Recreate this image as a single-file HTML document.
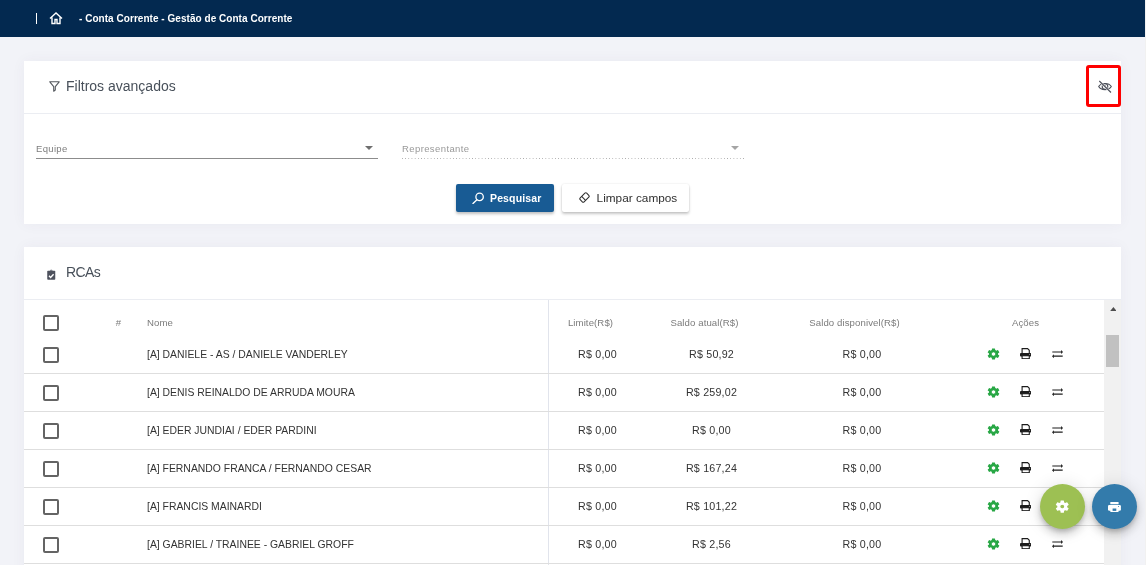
<!DOCTYPE html>
<html><head><meta charset="utf-8">
<style>
*{box-sizing:border-box;margin:0;padding:0}
html,body{width:1146px;height:565px;overflow:hidden;background:#f2f3f8;font-family:"Liberation Sans",sans-serif;}
.abs,.t{position:absolute}
.t{white-space:nowrap}
#top{position:absolute;left:0;top:0;width:1146px;height:37px;background:#032950}
#top .pipe{position:absolute;left:36px;top:13px;width:1px;height:11px;background:#fff}
#top .crumb{position:absolute;left:79px;top:13px;letter-spacing:.04px;font-size:10px;font-weight:bold;color:#fff;white-space:nowrap;line-height:12px}
.card{position:absolute;left:24px;width:1097px;background:#fff;box-shadow:0 0 13px rgba(82,63,105,.05)}
.card .hd{position:absolute;left:0;top:52px;width:100%;height:1px;background:#ebedf2}
.title{position:absolute;left:42px;top:17px;font-size:14px;color:#48505a;white-space:nowrap;line-height:16px}
.lbl{font-size:9.5px;line-height:12px;color:#7d7d7d}
.cb{position:absolute;width:16px;height:16px;border:2px solid #646464;border-radius:2px;background:#fff}
.th{font-size:9.6px;letter-spacing:.1px;line-height:12px;color:#7b7b7b;transform:translateX(-50%)}
.td{font-size:10.4px;line-height:13px;color:#333}
.num{font-size:10.7px;letter-spacing:.2px}
.tdc{transform:translateX(-50%)}
.rb{position:absolute;left:0;width:1080px;height:1px;background:#dedede}
.fab{position:absolute;width:45px;height:45px;border-radius:50%;box-shadow:0 3px 5px -1px rgba(0,0,0,.2),0 6px 10px 0 rgba(0,0,0,.14),0 1px 18px 0 rgba(0,0,0,.12)}
#wrap{position:absolute;left:0;top:0;width:1146px;height:565px;will-change:transform}
</style></head><body><div id="wrap">
<div id="top"><div class="pipe"></div>
<svg class="abs" style="left:49px;top:12px" width="14" height="13" viewBox="0 0 14 13"><path d="M1 6.5 L7 1 L13 6.5 M3 5.5 V11.5 H6 V7.5 H8 V11.5 H11 V5.5" fill="none" stroke="#fff" stroke-width="1.4" stroke-linejoin="miter"/></svg>
<div class="crumb">- Conta Corrente - Gestão de Conta Corrente</div></div>

<div class="card" id="c1" style="top:61px;height:163px">
 <div class="hd"></div>
 <svg class="abs" style="left:24.7px;top:19.6px" width="11" height="11" viewBox="0 0 11 11"><path d="M0.8 0.8 H10.2 L6.3 5.6 V9 L4.7 10.2 V5.6 Z" fill="none" stroke="#55595f" stroke-width="1.1" stroke-linejoin="round"/></svg>
 <div class="title">Filtros avançados</div>
 <!-- red highlight -->
 <div class="abs" style="left:1062px;top:4px;width:35px;height:42px;border:3px solid #fe0000;border-radius:3px"></div>
 <svg class="abs" style="left:1073.5px;top:19px" width="15" height="14" viewBox="0 0 15 14"><path d="M.7 6.5 C2.9 2.4 11 2.4 13.3 6.5 C11 10.6 2.9 10.6 .7 6.5 Z" fill="none" stroke="#4a4e58" stroke-width="1.1"/><circle cx="7" cy="6.5" r="2.8" fill="none" stroke="#4a4e58" stroke-width="1.1"/><circle cx="6.9" cy="6.1" r="1.1" fill="#4a4e58"/><path d="M1.3 1 L13 12.5" stroke="#fff" stroke-width="2.2"/><path d="M1.3 1 L13 12.5" stroke="#4a4e58" stroke-width="1.1"/></svg>

 <div class="t lbl" style="left:12px;top:82px;letter-spacing:.33px">Equipe</div>
 <div class="abs" style="left:12px;top:97px;width:342px;height:1px;background:#8c8c8c"></div>
 <svg class="abs" style="left:341px;top:85px" width="8" height="4" viewBox="0 0 8 4"><path d="M0 0H8L4 4Z" fill="#6f6f6f"/></svg>

 <div class="t lbl" style="left:378px;top:82px;color:#999;letter-spacing:.4px">Representante</div>
 <div class="abs" style="left:378px;top:97px;width:342px;height:1px;background-image:linear-gradient(to right,#a9a9a9 0,#a9a9a9 1px,transparent 1px);background-size:3.2px 1px;background-repeat:repeat-x"></div>
 <svg class="abs" style="left:707px;top:85px" width="8" height="4" viewBox="0 0 8 4"><path d="M0 0H8L4 4Z" fill="#a5a5a5"/></svg>

 <!-- buttons -->
 <div class="abs" style="left:432px;top:123px;width:98px;height:28px;background:#185b94;border-radius:2px;box-shadow:0 2px 3px rgba(0,0,0,.25)"></div>
 <svg class="abs" style="left:448px;top:131px" width="13" height="12" viewBox="0 0 13 12"><circle cx="7.6" cy="4.9" r="3.7" fill="none" stroke="#fff" stroke-width="1.3"/><path d="M4.9 7.7 L1 11.4" stroke="#fff" stroke-width="1.4" stroke-linecap="round"/></svg>
 <div class="t" style="left:466px;top:131px;font-size:10.5px;letter-spacing:.14px;line-height:13px;font-weight:bold;color:#fff">Pesquisar</div>
 <div class="abs" style="left:538px;top:123px;width:127px;height:28px;background:#fff;border-radius:2px;box-shadow:0 2px 3px rgba(0,0,0,.22),0 0 2px rgba(0,0,0,.12)"></div>
 <svg class="abs" style="left:554.6px;top:131.4px" width="11" height="11" viewBox="0 0 12 12"><g transform="rotate(-45 6 6)"><rect x="1" y="3" width="10" height="6" rx="1.4" fill="none" stroke="#2e2e2e" stroke-width="1.15"/><path d="M4.6 3V9" stroke="#2e2e2e" stroke-width="1.1"/></g></svg>
 <div class="t" style="left:572.6px;top:130px;font-size:11.8px;line-height:14px;color:#2f2f2f">Limpar campos</div>
</div>

<div class="card" id="c2" style="top:247px;height:330px">
 <div class="hd"></div>
 <svg class="abs" style="left:23px;top:22.3px" width="8.5" height="11.2" viewBox="0 0 9 12"><path d="M3 2.2 A1.5 1.7 0 0 1 6 2.2Z" fill="#8d909a"/><rect x=".2" y="2" width="8.6" height="9.6" rx=".8" fill="#4d515d"/><path d="M2.1 7.3 L3.8 9 L7 5.7" fill="none" stroke="#fff" stroke-width="1.5"/></svg>
 <div class="title" style="letter-spacing:-.6px">RCAs</div>
 <!-- table -->
 <div class="abs" style="left:524px;top:53px;width:1px;height:280px;background:#e1e4ec"></div>
 <div class="cb" style="left:19px;top:68px"></div>
 <div class="t th" style="left:94.5px;top:70px">#</div>
 <div class="t th" style="left:123px;top:70px;transform:none">Nome</div>
 <div class="t th" style="left:566.5px;top:70px">Limite(R$)</div>
 <div class="t th" style="left:680.5px;top:70px">Saldo atual(R$)</div>
 <div class="t th" style="left:830.5px;top:70px">Saldo disponivel(R$)</div>
 <div class="t th" style="left:1001.5px;top:70px">Ações</div>

 <div class="cb" style="left:19px;top:100px"></div>
 <div class="t td" style="left:123px;top:101px">[A] DANIELE - AS / DANIELE VANDERLEY</div>
 <div class="t td tdc num" style="left:573.5px;top:101px">R$ 0,00</div>
 <div class="t td tdc num" style="left:687.5px;top:101px">R$ 50,92</div>
 <div class="t td tdc num" style="left:838px;top:101px">R$ 0,00</div>
 <svg class="abs" style="left:961.9px;top:99.6px" width="15" height="14" viewBox="0 0 24 24" preserveAspectRatio="none" fill="#28a745"><path d="M19.14 12.94c.04-.3.06-.61.06-.94 0-.32-.02-.64-.07-.94l2.03-1.58a.49.49 0 0 0 .12-.61l-1.92-3.32a.488.488 0 0 0-.59-.22l-2.39.96c-.5-.38-1.03-.7-1.62-.94l-.36-2.54a.484.484 0 0 0-.48-.41h-3.84c-.24 0-.43.17-.47.41l-.36 2.54c-.59.24-1.13.57-1.62.94l-2.39-.96c-.22-.08-.47 0-.59.22L2.74 8.87c-.12.21-.08.47.12.61l2.03 1.58c-.05.3-.09.63-.09.94s.02.64.07.94l-2.03 1.58a.49.49 0 0 0-.12.61l1.92 3.32c.12.22.37.29.59.22l2.39-.96c.5.38 1.03.7 1.62.94l.36 2.54c.05.24.24.41.48.41h3.84c.24 0 .44-.17.47-.41l.36-2.54c.59-.24 1.13-.56 1.62-.94l2.39.96c.22.08.47 0 .59-.22l1.92-3.32c.12-.22.07-.47-.12-.61l-2.01-1.58zM12 15.6c-1.98 0-3.6-1.62-3.6-3.6s1.62-3.6 3.6-3.6 3.6 1.62 3.6 3.6-1.62 3.6-3.6 3.6z"/><circle cx="12" cy="12" r="3.7" fill="none" stroke="#28a745" stroke-width="1.4"/></svg>
 <svg class="abs" style="left:995.7px;top:101.1px" width="11.2" height="11.3" viewBox="0 0 11.2 11" preserveAspectRatio="none"><path d="M2.1 5 V.55 H7.6 L9.3 2.2 V5" fill="#fff" stroke="#1c1c1c" stroke-width="1.1"/><rect x="0" y="4.9" width="11.2" height="3.3" rx=".9" fill="#1c1c1c"/><rect x="2.1" y="7.5" width="7.2" height="2.95" fill="#fff" stroke="#1c1c1c" stroke-width="1.1"/><circle cx="9.75" cy="6.25" r=".45" fill="#fff"/></svg>
 <svg class="abs" style="left:1027.9px;top:102.6px" width="11" height="8.2" viewBox="0 0 11 8.2"><path d="M.3 2 H9.4 M1.6 6.2 H10.7" stroke="#1c1c1c" stroke-width="1.2"/><path d="M9.1 0 L11 2 L9.1 4Z M1.9 4.2 L0 6.2 L1.9 8.2Z" fill="#1c1c1c"/></svg>
 <div class="rb" style="top:126px"></div>
 <div class="cb" style="left:19px;top:138px"></div>
 <div class="t td" style="left:123px;top:139px">[A] DENIS REINALDO DE ARRUDA MOURA</div>
 <div class="t td tdc num" style="left:573.5px;top:139px">R$ 0,00</div>
 <div class="t td tdc num" style="left:687.5px;top:139px">R$ 259,02</div>
 <div class="t td tdc num" style="left:838px;top:139px">R$ 0,00</div>
 <svg class="abs" style="left:961.9px;top:137.6px" width="15" height="14" viewBox="0 0 24 24" preserveAspectRatio="none" fill="#28a745"><path d="M19.14 12.94c.04-.3.06-.61.06-.94 0-.32-.02-.64-.07-.94l2.03-1.58a.49.49 0 0 0 .12-.61l-1.92-3.32a.488.488 0 0 0-.59-.22l-2.39.96c-.5-.38-1.03-.7-1.62-.94l-.36-2.54a.484.484 0 0 0-.48-.41h-3.84c-.24 0-.43.17-.47.41l-.36 2.54c-.59.24-1.13.57-1.62.94l-2.39-.96c-.22-.08-.47 0-.59.22L2.74 8.87c-.12.21-.08.47.12.61l2.03 1.58c-.05.3-.09.63-.09.94s.02.64.07.94l-2.03 1.58a.49.49 0 0 0-.12.61l1.92 3.32c.12.22.37.29.59.22l2.39-.96c.5.38 1.03.7 1.62.94l.36 2.54c.05.24.24.41.48.41h3.84c.24 0 .44-.17.47-.41l.36-2.54c.59-.24 1.13-.56 1.62-.94l2.39.96c.22.08.47 0 .59-.22l1.92-3.32c.12-.22.07-.47-.12-.61l-2.01-1.58zM12 15.6c-1.98 0-3.6-1.62-3.6-3.6s1.62-3.6 3.6-3.6 3.6 1.62 3.6 3.6-1.62 3.6-3.6 3.6z"/><circle cx="12" cy="12" r="3.7" fill="none" stroke="#28a745" stroke-width="1.4"/></svg>
 <svg class="abs" style="left:995.7px;top:139.1px" width="11.2" height="11.3" viewBox="0 0 11.2 11" preserveAspectRatio="none"><path d="M2.1 5 V.55 H7.6 L9.3 2.2 V5" fill="#fff" stroke="#1c1c1c" stroke-width="1.1"/><rect x="0" y="4.9" width="11.2" height="3.3" rx=".9" fill="#1c1c1c"/><rect x="2.1" y="7.5" width="7.2" height="2.95" fill="#fff" stroke="#1c1c1c" stroke-width="1.1"/><circle cx="9.75" cy="6.25" r=".45" fill="#fff"/></svg>
 <svg class="abs" style="left:1027.9px;top:140.6px" width="11" height="8.2" viewBox="0 0 11 8.2"><path d="M.3 2 H9.4 M1.6 6.2 H10.7" stroke="#1c1c1c" stroke-width="1.2"/><path d="M9.1 0 L11 2 L9.1 4Z M1.9 4.2 L0 6.2 L1.9 8.2Z" fill="#1c1c1c"/></svg>
 <div class="rb" style="top:164px"></div>
 <div class="cb" style="left:19px;top:176px"></div>
 <div class="t td" style="left:123px;top:177px">[A] EDER JUNDIAI / EDER PARDINI</div>
 <div class="t td tdc num" style="left:573.5px;top:177px">R$ 0,00</div>
 <div class="t td tdc num" style="left:687.5px;top:177px">R$ 0,00</div>
 <div class="t td tdc num" style="left:838px;top:177px">R$ 0,00</div>
 <svg class="abs" style="left:961.9px;top:175.6px" width="15" height="14" viewBox="0 0 24 24" preserveAspectRatio="none" fill="#28a745"><path d="M19.14 12.94c.04-.3.06-.61.06-.94 0-.32-.02-.64-.07-.94l2.03-1.58a.49.49 0 0 0 .12-.61l-1.92-3.32a.488.488 0 0 0-.59-.22l-2.39.96c-.5-.38-1.03-.7-1.62-.94l-.36-2.54a.484.484 0 0 0-.48-.41h-3.84c-.24 0-.43.17-.47.41l-.36 2.54c-.59.24-1.13.57-1.62.94l-2.39-.96c-.22-.08-.47 0-.59.22L2.74 8.87c-.12.21-.08.47.12.61l2.03 1.58c-.05.3-.09.63-.09.94s.02.64.07.94l-2.03 1.58a.49.49 0 0 0-.12.61l1.92 3.32c.12.22.37.29.59.22l2.39-.96c.5.38 1.03.7 1.62.94l.36 2.54c.05.24.24.41.48.41h3.84c.24 0 .44-.17.47-.41l.36-2.54c.59-.24 1.13-.56 1.62-.94l2.39.96c.22.08.47 0 .59-.22l1.92-3.32c.12-.22.07-.47-.12-.61l-2.01-1.58zM12 15.6c-1.98 0-3.6-1.62-3.6-3.6s1.62-3.6 3.6-3.6 3.6 1.62 3.6 3.6-1.62 3.6-3.6 3.6z"/><circle cx="12" cy="12" r="3.7" fill="none" stroke="#28a745" stroke-width="1.4"/></svg>
 <svg class="abs" style="left:995.7px;top:177.1px" width="11.2" height="11.3" viewBox="0 0 11.2 11" preserveAspectRatio="none"><path d="M2.1 5 V.55 H7.6 L9.3 2.2 V5" fill="#fff" stroke="#1c1c1c" stroke-width="1.1"/><rect x="0" y="4.9" width="11.2" height="3.3" rx=".9" fill="#1c1c1c"/><rect x="2.1" y="7.5" width="7.2" height="2.95" fill="#fff" stroke="#1c1c1c" stroke-width="1.1"/><circle cx="9.75" cy="6.25" r=".45" fill="#fff"/></svg>
 <svg class="abs" style="left:1027.9px;top:178.6px" width="11" height="8.2" viewBox="0 0 11 8.2"><path d="M.3 2 H9.4 M1.6 6.2 H10.7" stroke="#1c1c1c" stroke-width="1.2"/><path d="M9.1 0 L11 2 L9.1 4Z M1.9 4.2 L0 6.2 L1.9 8.2Z" fill="#1c1c1c"/></svg>
 <div class="rb" style="top:202px"></div>
 <div class="cb" style="left:19px;top:214px"></div>
 <div class="t td" style="left:123px;top:215px">[A] FERNANDO FRANCA / FERNANDO CESAR</div>
 <div class="t td tdc num" style="left:573.5px;top:215px">R$ 0,00</div>
 <div class="t td tdc num" style="left:687.5px;top:215px">R$ 167,24</div>
 <div class="t td tdc num" style="left:838px;top:215px">R$ 0,00</div>
 <svg class="abs" style="left:961.9px;top:213.6px" width="15" height="14" viewBox="0 0 24 24" preserveAspectRatio="none" fill="#28a745"><path d="M19.14 12.94c.04-.3.06-.61.06-.94 0-.32-.02-.64-.07-.94l2.03-1.58a.49.49 0 0 0 .12-.61l-1.92-3.32a.488.488 0 0 0-.59-.22l-2.39.96c-.5-.38-1.03-.7-1.62-.94l-.36-2.54a.484.484 0 0 0-.48-.41h-3.84c-.24 0-.43.17-.47.41l-.36 2.54c-.59.24-1.13.57-1.62.94l-2.39-.96c-.22-.08-.47 0-.59.22L2.74 8.87c-.12.21-.08.47.12.61l2.03 1.58c-.05.3-.09.63-.09.94s.02.64.07.94l-2.03 1.58a.49.49 0 0 0-.12.61l1.92 3.32c.12.22.37.29.59.22l2.39-.96c.5.38 1.03.7 1.62.94l.36 2.54c.05.24.24.41.48.41h3.84c.24 0 .44-.17.47-.41l.36-2.54c.59-.24 1.13-.56 1.62-.94l2.39.96c.22.08.47 0 .59-.22l1.92-3.32c.12-.22.07-.47-.12-.61l-2.01-1.58zM12 15.6c-1.98 0-3.6-1.62-3.6-3.6s1.62-3.6 3.6-3.6 3.6 1.62 3.6 3.6-1.62 3.6-3.6 3.6z"/><circle cx="12" cy="12" r="3.7" fill="none" stroke="#28a745" stroke-width="1.4"/></svg>
 <svg class="abs" style="left:995.7px;top:215.1px" width="11.2" height="11.3" viewBox="0 0 11.2 11" preserveAspectRatio="none"><path d="M2.1 5 V.55 H7.6 L9.3 2.2 V5" fill="#fff" stroke="#1c1c1c" stroke-width="1.1"/><rect x="0" y="4.9" width="11.2" height="3.3" rx=".9" fill="#1c1c1c"/><rect x="2.1" y="7.5" width="7.2" height="2.95" fill="#fff" stroke="#1c1c1c" stroke-width="1.1"/><circle cx="9.75" cy="6.25" r=".45" fill="#fff"/></svg>
 <svg class="abs" style="left:1027.9px;top:216.6px" width="11" height="8.2" viewBox="0 0 11 8.2"><path d="M.3 2 H9.4 M1.6 6.2 H10.7" stroke="#1c1c1c" stroke-width="1.2"/><path d="M9.1 0 L11 2 L9.1 4Z M1.9 4.2 L0 6.2 L1.9 8.2Z" fill="#1c1c1c"/></svg>
 <div class="rb" style="top:240px"></div>
 <div class="cb" style="left:19px;top:252px"></div>
 <div class="t td" style="left:123px;top:253px">[A] FRANCIS MAINARDI</div>
 <div class="t td tdc num" style="left:573.5px;top:253px">R$ 0,00</div>
 <div class="t td tdc num" style="left:687.5px;top:253px">R$ 101,22</div>
 <div class="t td tdc num" style="left:838px;top:253px">R$ 0,00</div>
 <svg class="abs" style="left:961.9px;top:251.6px" width="15" height="14" viewBox="0 0 24 24" preserveAspectRatio="none" fill="#28a745"><path d="M19.14 12.94c.04-.3.06-.61.06-.94 0-.32-.02-.64-.07-.94l2.03-1.58a.49.49 0 0 0 .12-.61l-1.92-3.32a.488.488 0 0 0-.59-.22l-2.39.96c-.5-.38-1.03-.7-1.62-.94l-.36-2.54a.484.484 0 0 0-.48-.41h-3.84c-.24 0-.43.17-.47.41l-.36 2.54c-.59.24-1.13.57-1.62.94l-2.39-.96c-.22-.08-.47 0-.59.22L2.74 8.87c-.12.21-.08.47.12.61l2.03 1.58c-.05.3-.09.63-.09.94s.02.64.07.94l-2.03 1.58a.49.49 0 0 0-.12.61l1.92 3.32c.12.22.37.29.59.22l2.39-.96c.5.38 1.03.7 1.62.94l.36 2.54c.05.24.24.41.48.41h3.84c.24 0 .44-.17.47-.41l.36-2.54c.59-.24 1.13-.56 1.62-.94l2.39.96c.22.08.47 0 .59-.22l1.92-3.32c.12-.22.07-.47-.12-.61l-2.01-1.58zM12 15.6c-1.98 0-3.6-1.62-3.6-3.6s1.62-3.6 3.6-3.6 3.6 1.62 3.6 3.6-1.62 3.6-3.6 3.6z"/><circle cx="12" cy="12" r="3.7" fill="none" stroke="#28a745" stroke-width="1.4"/></svg>
 <svg class="abs" style="left:995.7px;top:253.1px" width="11.2" height="11.3" viewBox="0 0 11.2 11" preserveAspectRatio="none"><path d="M2.1 5 V.55 H7.6 L9.3 2.2 V5" fill="#fff" stroke="#1c1c1c" stroke-width="1.1"/><rect x="0" y="4.9" width="11.2" height="3.3" rx=".9" fill="#1c1c1c"/><rect x="2.1" y="7.5" width="7.2" height="2.95" fill="#fff" stroke="#1c1c1c" stroke-width="1.1"/><circle cx="9.75" cy="6.25" r=".45" fill="#fff"/></svg>
 <svg class="abs" style="left:1027.9px;top:254.6px" width="11" height="8.2" viewBox="0 0 11 8.2"><path d="M.3 2 H9.4 M1.6 6.2 H10.7" stroke="#1c1c1c" stroke-width="1.2"/><path d="M9.1 0 L11 2 L9.1 4Z M1.9 4.2 L0 6.2 L1.9 8.2Z" fill="#1c1c1c"/></svg>
 <div class="rb" style="top:278px"></div>
 <div class="cb" style="left:19px;top:290px"></div>
 <div class="t td" style="left:123px;top:291px">[A] GABRIEL / TRAINEE - GABRIEL GROFF</div>
 <div class="t td tdc num" style="left:573.5px;top:291px">R$ 0,00</div>
 <div class="t td tdc num" style="left:687.5px;top:291px">R$ 2,56</div>
 <div class="t td tdc num" style="left:838px;top:291px">R$ 0,00</div>
 <svg class="abs" style="left:961.9px;top:289.6px" width="15" height="14" viewBox="0 0 24 24" preserveAspectRatio="none" fill="#28a745"><path d="M19.14 12.94c.04-.3.06-.61.06-.94 0-.32-.02-.64-.07-.94l2.03-1.58a.49.49 0 0 0 .12-.61l-1.92-3.32a.488.488 0 0 0-.59-.22l-2.39.96c-.5-.38-1.03-.7-1.62-.94l-.36-2.54a.484.484 0 0 0-.48-.41h-3.84c-.24 0-.43.17-.47.41l-.36 2.54c-.59.24-1.13.57-1.62.94l-2.39-.96c-.22-.08-.47 0-.59.22L2.74 8.87c-.12.21-.08.47.12.61l2.03 1.58c-.05.3-.09.63-.09.94s.02.64.07.94l-2.03 1.58a.49.49 0 0 0-.12.61l1.92 3.32c.12.22.37.29.59.22l2.39-.96c.5.38 1.03.7 1.62.94l.36 2.54c.05.24.24.41.48.41h3.84c.24 0 .44-.17.47-.41l.36-2.54c.59-.24 1.13-.56 1.62-.94l2.39.96c.22.08.47 0 .59-.22l1.92-3.32c.12-.22.07-.47-.12-.61l-2.01-1.58zM12 15.6c-1.98 0-3.6-1.62-3.6-3.6s1.62-3.6 3.6-3.6 3.6 1.62 3.6 3.6-1.62 3.6-3.6 3.6z"/><circle cx="12" cy="12" r="3.7" fill="none" stroke="#28a745" stroke-width="1.4"/></svg>
 <svg class="abs" style="left:995.7px;top:291.1px" width="11.2" height="11.3" viewBox="0 0 11.2 11" preserveAspectRatio="none"><path d="M2.1 5 V.55 H7.6 L9.3 2.2 V5" fill="#fff" stroke="#1c1c1c" stroke-width="1.1"/><rect x="0" y="4.9" width="11.2" height="3.3" rx=".9" fill="#1c1c1c"/><rect x="2.1" y="7.5" width="7.2" height="2.95" fill="#fff" stroke="#1c1c1c" stroke-width="1.1"/><circle cx="9.75" cy="6.25" r=".45" fill="#fff"/></svg>
 <svg class="abs" style="left:1027.9px;top:292.6px" width="11" height="8.2" viewBox="0 0 11 8.2"><path d="M.3 2 H9.4 M1.6 6.2 H10.7" stroke="#1c1c1c" stroke-width="1.2"/><path d="M9.1 0 L11 2 L9.1 4Z M1.9 4.2 L0 6.2 L1.9 8.2Z" fill="#1c1c1c"/></svg>
 <div class="rb" style="top:316px"></div>

 <!-- scrollbar -->
 <div class="abs" style="left:1080px;top:53px;width:17px;height:280px;background:#f1f1f1"></div>
 <svg class="abs" style="left:1085.6px;top:59.8px" width="6.8" height="4.2" viewBox="0 0 8 5"><path d="M0 5H8L4 0Z" fill="#4d4d4d"/></svg>
 <div class="abs" style="left:1082px;top:88px;width:13px;height:32px;background:#c1c1c1"></div>
</div>

<div class="fab" style="left:1040px;top:484px;background:#9dc053"></div>
<svg class="abs" style="left:1054.45px;top:499.3px" width="16.5" height="15.2" viewBox="0 0 24 24" preserveAspectRatio="none" fill="#fff"><path d="M19.14 12.94c.04-.3.06-.61.06-.94 0-.32-.02-.64-.07-.94l2.03-1.58a.49.49 0 0 0 .12-.61l-1.92-3.32a.488.488 0 0 0-.59-.22l-2.39.96c-.5-.38-1.03-.7-1.62-.94l-.36-2.54a.484.484 0 0 0-.48-.41h-3.84c-.24 0-.43.17-.47.41l-.36 2.54c-.59.24-1.13.57-1.62.94l-2.39-.96c-.22-.08-.47 0-.59.22L2.74 8.87c-.12.21-.08.47.12.61l2.03 1.58c-.05.3-.09.63-.09.94s.02.64.07.94l-2.03 1.58a.49.49 0 0 0-.12.61l1.92 3.32c.12.22.37.29.59.22l2.39-.96c.5.38 1.03.7 1.62.94l.36 2.54c.05.24.24.41.48.41h3.84c.24 0 .44-.17.47-.41l.36-2.54c.59-.24 1.13-.56 1.62-.94l2.39.96c.22.08.47 0 .59-.22l1.92-3.32c.12-.22.07-.47-.12-.61l-2.01-1.58zM12 15.6c-1.98 0-3.6-1.62-3.6-3.6s1.62-3.6 3.6-3.6 3.6 1.62 3.6 3.6-1.62 3.6-3.6 3.6z"/><circle cx="12" cy="12" r="3.7" fill="none" stroke="#fff" stroke-width="1.6"/></svg>
<div class="fab" style="left:1092px;top:484px;background:#337bab"></div>
<svg class="abs" style="left:1108.2px;top:502px" width="12.9" height="10" viewBox="0 0 12.9 10"><rect x="2.3" y="0" width="8.3" height="2.3" rx=".3" fill="#fff"/><rect x="0" y="3" width="12.9" height="5.7" rx="1.3" fill="#fff"/><rect x="2.3" y="6" width="8.3" height="4" rx=".4" fill="#fff"/><rect x="4.6" y="6.5" width="3.7" height="2.4" fill="#337bab"/><circle cx="10.6" cy="4.4" r=".5" fill="#337bab"/></svg>
<div class="abs" style="left:1145px;top:0;width:1px;height:565px;background:#f1f1f1"></div>
</div></body></html>
